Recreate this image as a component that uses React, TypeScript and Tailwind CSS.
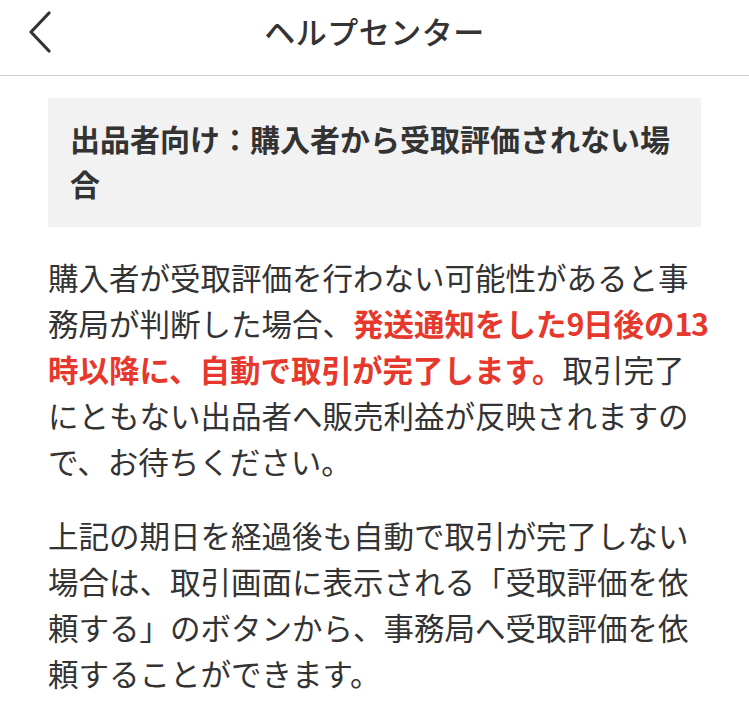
export default function App() {
    const red = 'font-bold text-[#e6382c]';
    const redNum = 'font-bold text-[#e6382c] tracking-[-1.5px]';

    return (
        <main
            className="bg-white min-h-screen text-[#333333]"
            style={{ fontFamily: '"Noto Sans CJK JP", "Noto Sans", sans-serif' }}
        >
            <header className="relative h-[76px] border-b border-[#d0d0d0] flex items-start justify-center">
                <button className="absolute left-[24px] top-[10px] w-[32px] h-[44px] flex items-center justify-center">
                    <svg width="26" height="42" viewBox="0 0 26 42" fill="none">
                        <path d="M22 2 L4 21 L22 40" stroke="#333333" strokeWidth="3.2" strokeLinecap="round" strokeLinejoin="round" />
                    </svg>
                </button>
                <h1 className="mt-[10px] text-[31px] leading-[42px] font-medium tracking-[0.5px]">ヘルプセンター</h1>
            </header>

            <div className="pl-[48px] pr-[34px] pt-[22px]">
                <div className="bg-[#f2f2f2] mr-[14px] px-[22px] pt-[18px] pb-[21px]">
                    <h2 className="text-[30px] leading-[45px] font-bold">
                        出品者向け：購入者から受取評価されない場合
                    </h2>
                </div>

                <div className="mt-[27px] text-[30.5px] leading-[46px]">
                    <p>
                        購入者が受取評価を行わない可能性があると事務局が判断した場合、
                        <span className={red}>発送通知をした</span>
                        <span className={redNum}>9</span>
                        <span className={red}>日後の</span>
                        <span className={redNum}>13</span>
                        <span className={red}>時以降に、自動で取引が完了します。</span>
                        取引完了にともない出品者へ販売利益が反映されますので、お待ちください。
                    </p>
                    <p className="mt-[28px]">
                        上記の期日を経過後も自動で取引が完了しない場合は、取引画面に表示される「受取評価を依頼する」のボタンから、事務局へ受取評価を依頼することができます。
                    </p>
                </div>
            </div>
        </main>
    );
}
